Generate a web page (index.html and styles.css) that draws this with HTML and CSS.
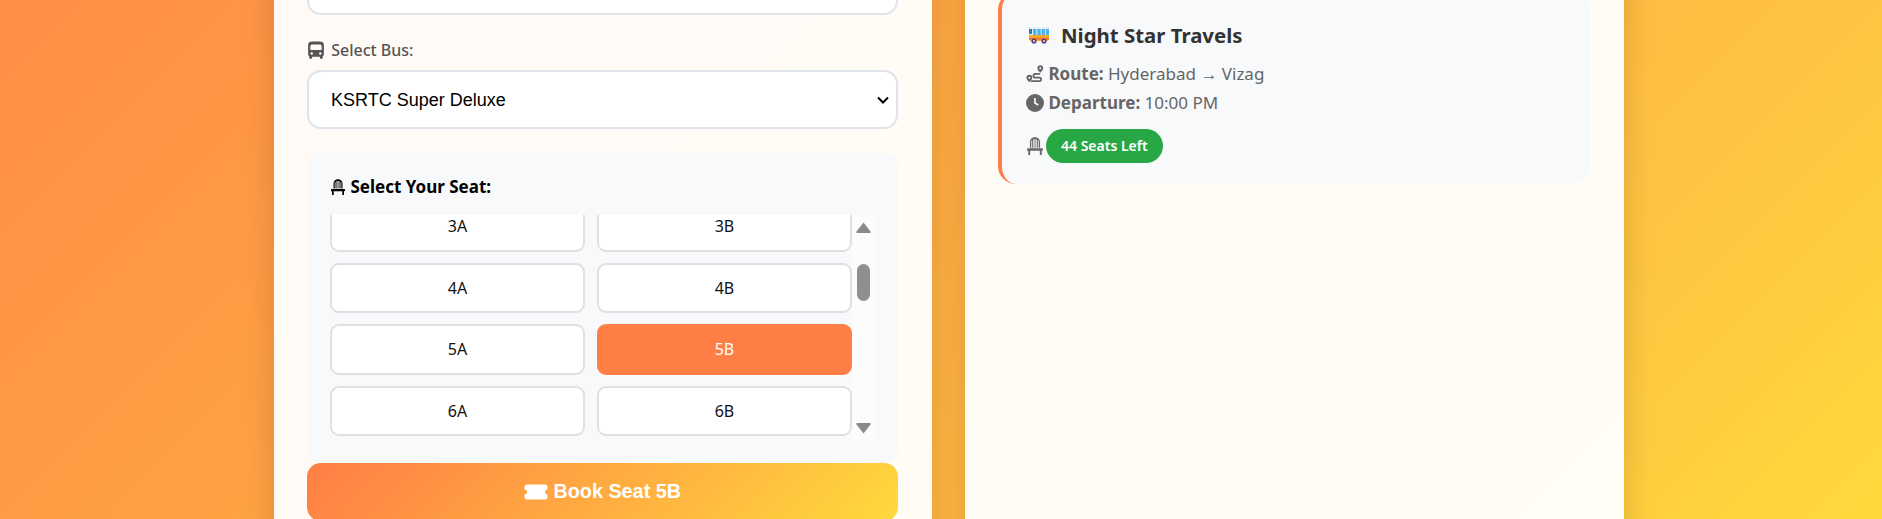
FILE: index.html
```html
<!DOCTYPE html>
<html lang="en">
<head>
  <meta charset="UTF-8" />
  <title>Bus Booking</title>
  <link rel="stylesheet" href="styles.css">
</head>
<body>
  <div class="page">
    <div class="columns">
      <section class="card">
        <input class="text-input" type="text" />

        <label class="field-label" for="bus">
          <svg class="icon" viewBox="0 0 16 16"><path fill-rule="evenodd" d="M4.500.5h7c2 0 3.500 1 3.500 2.500v9c0 .7-.4 1.200-1 1.500V15a.8.8 0 0 1-.8.8h-1a.8.8 0 0 1-.8-.8v-1H4.600v1a.8.8 0 0 1-.8.8h-1A.8.8 0 0 1 2 15v-1.500c-.6-.3-1-.8-1-1.500V3C1 1.500 2.500.5 4.500.5zM3 4.500v3c0 .3.200.5.500.5h9c.3 0 .5-.2.500-.5v-3c0-.8-.6-1.500-1.500-1.500h-7C3.600 3 3 3.700 3 4.500zm1.200 7.800a1.100 1.100 0 1 0 0-2.200 1.100 1.100 0 0 0 0 2.200zm7.600 0a1.100 1.100 0 1 0 0-2.200 1.100 1.100 0 0 0 0 2.200z"/></svg>
          Select Bus:
        </label>
        <select class="bus-select" id="bus">
          <option>KSRTC Super Deluxe</option>
        </select>

        <div class="seat-panel">
          <h3 class="seat-title">
            <svg class="icon" viewBox="0 0 16 16"><path d="M3.500 9.500V4.500C3.500 2 5.500.2 8 .2s4.500 1.800 4.500 4.300v5h-1.200V3.200h-.8v6.300h-1V2.100H8.400v7.400h-.8V2.100H6.500v7.400h-1V3.200h-.8v6.300zM1.500 10h13c.3 0 .5.200.5.500v1.300c0 .3-.2.500-.5.500H14V16h-1.700v-3.700H3.700V16H2v-3.700h-.5a.5.5 0 0 1-.5-.5v-1.300c0-.3.200-.5.500-.5z"/></svg>
            Select Your Seat:
          </h3>
          <div class="seat-scroll">
            <div class="seat-view">
              <div class="seat-grid">
                <button class="seat">3A</button><button class="seat">3B</button>
                <button class="seat">4A</button><button class="seat">4B</button>
                <button class="seat">5A</button><button class="seat selected">5B</button>
                <button class="seat">6A</button><button class="seat">6B</button>
              </div>
            </div>
            <div class="scrollbar">
              <svg class="arrow" viewBox="0 0 15 11"><path d="M7.500.5 14.500 9.500a1 1 0 0 1-.8 1.500H1.300a1 1 0 0 1-.8-1.500z"/></svg>
              <div class="thumb"></div>
              <svg class="arrow arrow-down" viewBox="0 0 15 11"><path d="M7.500 10.500.5 1.500A1 1 0 0 1 1.300 0h12.400a1 1 0 0 1 .8 1.500z"/></svg>
            </div>
          </div>
        </div>

        <button class="book-btn">
          <svg class="ticket" viewBox="0 0 24 16"><path d="M3 .5h18c1.300 0 2.500 1 2.500 2.300V5.500a2.500 2.500 0 0 0 0 5v2.700c0 1.300-1.200 2.300-2.500 2.300H3c-1.300 0-2.500-1-2.500-2.300v-2.700a2.500 2.500 0 0 0 0-5V2.800C.5 1.500 1.700.5 3 .5z"/></svg>
          Book Seat 5B
        </button>
      </section>

      <section class="card card-right">
        <article class="bus-card">
          <h3 class="bus-name">
            <svg class="bus-emoji" viewBox="0 0 22 18">
              <rect x="1" y="1" width="20" height="14" rx="2" fill="#f9a825"/>
              <path d="M3 1h16a2 2 0 0 1 2 2v6H1V3a2 2 0 0 1 2-2z" fill="#e8f1f6"/>
              <rect x="1" y="3" width="3" height="5" fill="#1f7fb8"/>
              <rect x="5" y="3" width="3.400" height="6" fill="#4fb3e8"/>
              <rect x="9.300" y="3" width="3.400" height="6" fill="#4fb3e8"/>
              <rect x="13.600" y="3" width="3.400" height="6" fill="#4fb3e8"/>
              <rect x="17.800" y="3" width="3.200" height="6" fill="#4fb3e8"/>
              <rect x="1" y="12" width="20" height="1.500" fill="#ef6c35"/>
              <circle cx="6" cy="15" r="2.600" fill="#5c3d7a"/><circle cx="6" cy="15" r="1" fill="#e8dff0"/>
              <circle cx="16" cy="15" r="2.600" fill="#5c3d7a"/><circle cx="16" cy="15" r="1" fill="#e8dff0"/>
            </svg>
            Night Star Travels
          </h3>
          <p class="bus-line">
            <svg class="icon" viewBox="0 0 16 16"><path d="M12.700.3a2.600 2.600 0 0 1 2.600 2.600c0 1.300-1.600 3-2.600 4-1-1-2.600-2.700-2.600-4A2.600 2.600 0 0 1 12.700.3zm0 1.700a.9.9 0 1 0 0 1.800.9.900 0 0 0 0-1.800zM3 8.700a2.600 2.600 0 0 1 2.600 2.600c0 1.300-1.600 3-2.600 4-1-1-2.600-2.700-2.600-4A2.600 2.600 0 0 1 3 8.700zm0 1.700a.9.9 0 1 0 0 1.800.9.900 0 0 0 0-1.800z"/><path d="M12 7.800H8.300a1.700 1.700 0 0 0 0 3.400h3.600a1.100 1.100 0 0 1 0 3.100H5" fill="none" stroke="currentColor" stroke-width="1.600" stroke-linecap="round"/></svg>
            <strong>Route:</strong> Hyderabad → Vizag
          </p>
          <p class="bus-line">
            <svg class="icon" viewBox="0 0 16 16"><path fill-rule="evenodd" d="M8 0a8 8 0 1 1 0 16A8 8 0 0 1 8 0zm-.8 3.500v4.900l3.200 2.100.9-1.300-2.600-1.700v-4z"/></svg>
            <strong>Departure:</strong> 10:00 PM
          </p>
          <div class="seats-left">
            <svg class="icon" viewBox="0 0 16 16"><path d="M3.500 9.500V4.500C3.500 2 5.500.2 8 .2s4.500 1.800 4.500 4.300v5h-1.200V3.200h-.8v6.300h-1V2.100H8.400v7.400h-.8V2.100H6.500v7.400h-1V3.200h-.8v6.300zM1.500 10h13c.3 0 .5.200.5.500v1.300c0 .3-.2.500-.5.500H14V16h-1.700v-3.700H3.700V16H2v-3.700h-.5a.5.5 0 0 1-.5-.5v-1.300c0-.3.200-.5.500-.5z"/></svg>
            <span class="badge">44 Seats Left</span>
          </div>
        </article>
      </section>
    </div>
  </div>
</body>
</html>
```

FILE: styles.css
```css
* { box-sizing: border-box; }
html, body { margin: 0; height: 519px; overflow: hidden; }
body { font-family: "Noto Sans", "Open Sans", sans-serif; color: #333; }

.page {
  height: 519px;
  overflow: hidden;
  background: linear-gradient(135deg, #ff8e45 0%, #ff9b44 21.6%, #ffc441 78.4%, #ffd93d 100%);
  padding-left: 274px;
}
.columns { display: flex; gap: 33px; height: 640px; margin-top: -60px; }

.card {
  flex: 0 0 658px;
  background: rgba(255, 255, 255, 0.95);
  box-shadow: 0 10px 30px rgba(0, 0, 0, 0.15);
  padding: 0 34px 0 33px;
}
.card-right { flex-basis: 659px; padding-top: 52px; }

.icon { width: 18px; height: 18px; fill: currentColor; vertical-align: -3px; }

.text-input {
  display: block;
  width: 100%;
  height: 75px;
  border: 2px solid #e0e4ea;
  border-radius: 14px;
  background: #fff;
}
.field-label {
  display: block;
  margin: 25px 0 10px;
  font-size: 16px;
  line-height: 20px;
  font-weight: 500;
  color: #555;
}
.field-label .icon { margin-right: 2px; }
.bus-select {
  display: block;
  width: 100%;
  height: 59px;
  padding: 0 34px 0 22px;
  border: 2px solid #e0e4ea;
  border-radius: 14px;
  appearance: none;
  background: #fff url("data:image/svg+xml,%3Csvg xmlns='http://www.w3.org/2000/svg' viewBox='0 0 12 8'%3E%3Cpath d='M1 1.500 6 6.500 11 1.500' fill='none' stroke='%23000' stroke-width='2'/%3E%3C/svg%3E") no-repeat right 7px center / 12px 8px;
  font-family: "Liberation Sans", Arial, sans-serif;
  font-size: 18px;
  color: #000;
}

.seat-panel {
  height: 310px;
  margin-top: 24px;
  padding: 23px 23px 0 23px;
  background: #f8f9fa;
  border-radius: 14px;
}
.seat-title {
  margin: 0 0 17px;
  font-size: 17px;
  line-height: 22px;
  font-weight: 700;
  color: #000;
}
.seat-title .icon { width: 16px; height: 16px; vertical-align: -2px; }
.seat-scroll { display: flex; height: 225px; }
.seat-view { flex: 1; overflow: hidden; }
.seat-grid {
  display: grid;
  grid-template-columns: 1fr 1fr;
  gap: 11px 12px;
  margin-top: -14px;
}
.seat {
  height: 50.500px;
  border: 2px solid #dee0e3;
  border-radius: 9px;
  background: #fff;
  font-family: inherit;
  font-size: 16px;
  color: #111;
}
.seat.selected { background: #ff7e45; border-color: #ff7e45; color: #fff; }

.scrollbar {
  display: flex;
  flex-direction: column;
  align-items: center;
  width: 23px;
  padding-top: 7px;
  background: #fcfcfc;
}
.arrow { width: 15px; height: 11px; fill: #8a8a8a; }
.arrow-down { margin-top: auto; margin-bottom: 6px; }
.thumb { width: 13px; height: 37px; margin-top: 31px; background: #8f8f8f; border-radius: 7px; }

.book-btn {
  display: block;
  width: 100%;
  height: 58px;
  padding-bottom: 2px;
  border: none;
  border-radius: 14px;
  background: linear-gradient(135deg, #ff7e45, #ffd93d);
  font-family: "Liberation Sans", Arial, sans-serif;
  font-size: 19.800px;
  font-weight: 700;
  color: #fff;
}
.ticket { width: 24px; height: 16px; fill: #fff; vertical-align: -2px; }

.bus-card {
  height: 192px;
  padding: 29px 26px 0 24px;
  background: #f8f9fa;
  border-left: 4px solid #ff7e45;
  border-radius: 18px;
}
.bus-name {
  margin: 0 0 10px;
  font-size: 20.400px;
  line-height: 28px;
  font-weight: 700;
  color: #333;
  display: flex;
  align-items: center;
  gap: 11px;
}
.bus-emoji { width: 22px; height: 18px; margin-left: 2px; }
.bus-line {
  margin: 0;
  font-size: 17px;
  line-height: 29px;
  color: #666;
}
.bus-line strong { font-weight: 700; }
.seats-left {
  display: flex;
  align-items: center;
  gap: 2px;
  margin-top: 12px;
  color: #666;
}
.badge {
  display: inline-block;
  padding: 0 15px;
  font-size: 14px;
  line-height: 34px;
  font-weight: 600;
  color: #fff;
  background: #28a745;
  border-radius: 17px;
}
```
